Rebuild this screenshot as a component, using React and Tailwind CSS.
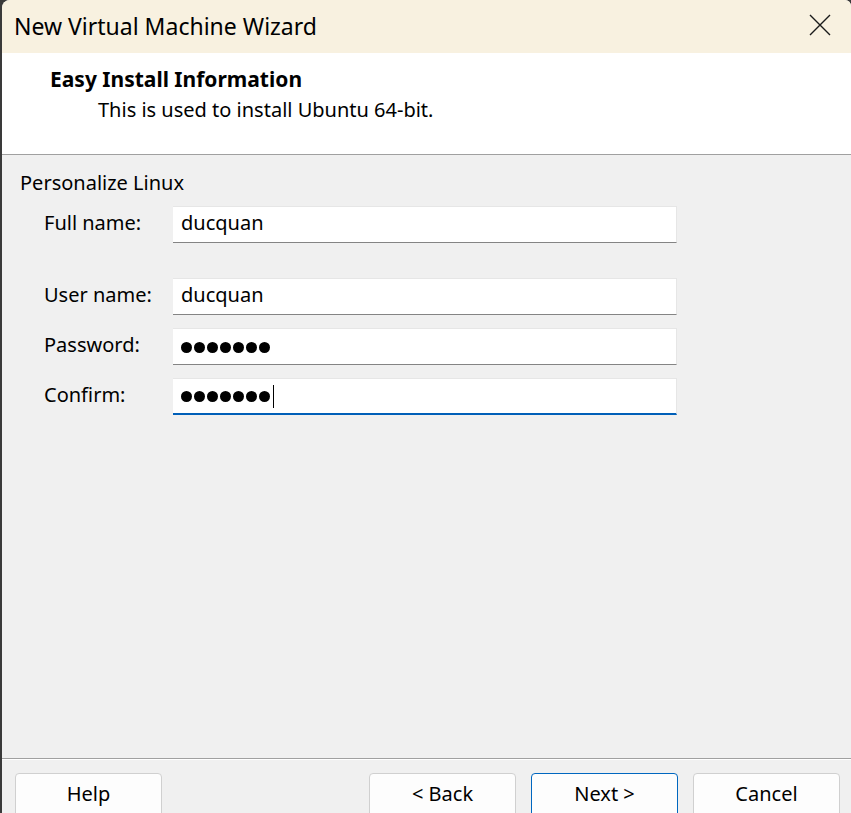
export default function App() {
  const font = { fontFamily: '"Noto Sans", "Open Sans", sans-serif' };
  const Field = ({ label, value, password, focused, className = "" }) => (
    <div className={`flex items-center ${className}`}>
      <div className="w-[171px] pl-[42px] pb-[4px] text-[20px] text-black leading-[28px] shrink-0 whitespace-nowrap">{label}</div>
      <div
        className={`relative w-[504px] h-[37px] bg-white border-t border-r border-[#e6e6e6] flex items-center pl-[8px] text-[20px] text-black ${
          focused ? "border-b-2 border-b-[#005fb8]" : "border-b border-b-[#848484]"
        }`}
      >
        {password ? (
          <span className="flex items-center gap-[2px] pt-[1px]">
            {Array.from({ length: 7 }).map((_, i) => (
              <span key={i} className="w-[11px] h-[11px] rounded-full bg-black inline-block" />
            ))}
            {focused && <span className="ml-[1px] w-px h-[23px] bg-black inline-block" />}
          </span>
        ) : (
          <span className="leading-[28px] pb-[3px]">{value}</span>
        )}
      </div>
    </div>
  );
  const Btn = ({ children, primary }) => (
    <button
      className={`w-[147px] h-[44px] shrink-0 rounded-[4px] bg-[#fdfdfd] text-[20px] text-black flex items-start justify-center pt-[6px] leading-[28px] ${
        primary ? "border border-[#0067c0]" : "border border-[#d0d0d0]"
      }`}
    >
      {children}
    </button>
  );
  return (
    <div className="w-[851px] h-[813px] bg-[#3a3a3a] pl-[2px] overflow-hidden" style={font}>
      <div className="h-[813px] flex flex-col bg-[#f0f0f0] rounded-tl-[8px] rounded-tr-[6px] overflow-hidden">
        <div className="h-[53px] bg-[#f8f1e0] flex items-center justify-between pl-[12px] pr-[20px] shrink-0">
          <span className="text-[23px] text-black leading-[30px] -mt-[2px]">New Virtual Machine Wizard</span>
          <svg width="22" height="22" viewBox="0 0 22 22" className="-mt-[3px]">
            <path d="M1 1 L21 21 M21 1 L1 21" stroke="#1a1a1a" strokeWidth="1.4" fill="none" />
          </svg>
        </div>
        <div className="h-[102px] bg-white border-b border-[#a0a0a0] shrink-0 pt-[12px]">
          <div className="pl-[48px] text-[21px] font-bold text-black leading-[28px]">Easy Install Information</div>
          <div className="pl-[96px] mt-[3px] text-[20px] text-black leading-[28px]">This is used to install Ubuntu 64-bit.</div>
        </div>
        <div className="flex-1 pt-[14px]">
          <div className="pl-[18px] text-[20px] text-black leading-[28px]">Personalize Linux</div>
          <Field label="Full name:" value="ducquan" className="mt-[9px]" />
          <Field label="User name:" value="ducquan" className="mt-[35px]" />
          <Field label="Password:" password className="mt-[13px]" />
          <Field label="Confirm:" password focused className="mt-[13px]" />
        </div>
        <div className="border-t border-[#a0a0a0] shrink-0">
          <div className="border-t border-white h-[14px]" />
          <div className="flex items-start pl-[13px] pr-[11px] h-[40px]">
            <Btn>Help</Btn>
            <div className="flex-1" />
            <div className="flex gap-[15px]">
              <Btn>&lt; Back</Btn>
              <Btn primary>Next &gt;</Btn>
              <Btn>Cancel</Btn>
            </div>
          </div>
        </div>
      </div>
    </div>
  );
}
